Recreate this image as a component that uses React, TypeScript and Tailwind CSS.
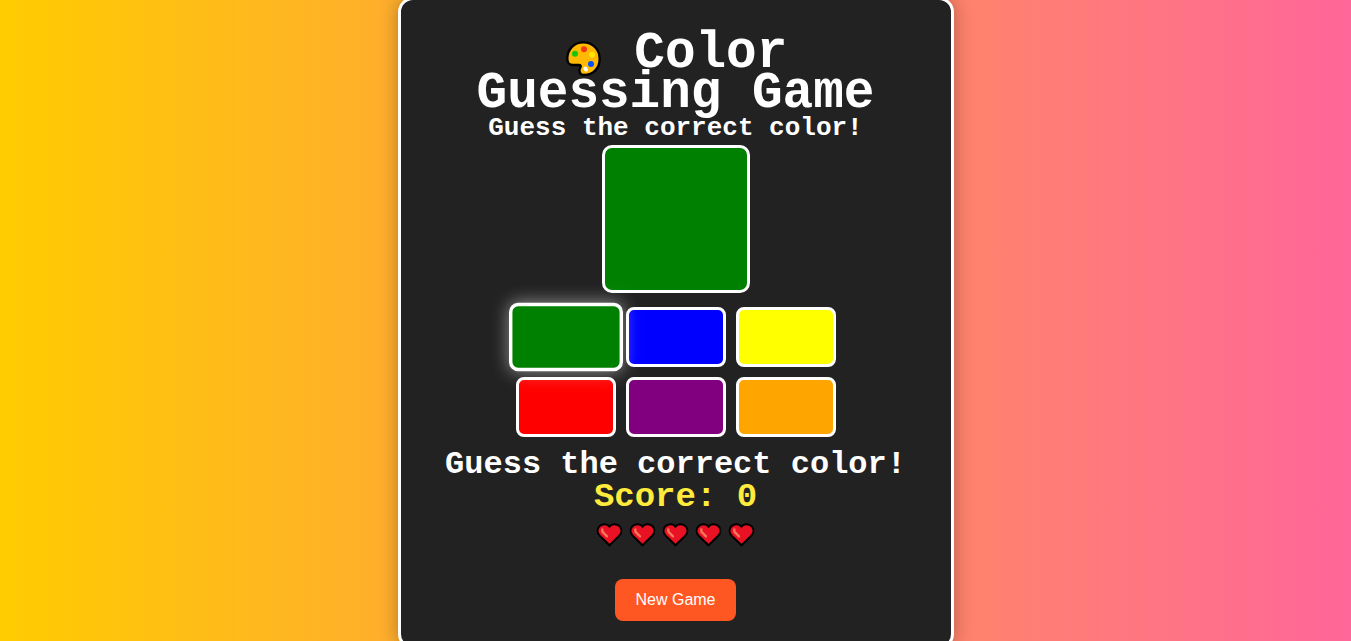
import { useState } from "react";

const COLORS = [
  { name: "Green", style: "bg-[green]" },
  { name: "Blue", style: "bg-[blue]" },
  { name: "Yellow", style: "bg-[yellow]" },
  { name: "Red", style: "bg-[red]" },
  { name: "Purple", style: "bg-[purple]" },
  { name: "Orange", style: "bg-[orange]" },
];

const MAX_LIVES = 5;

function Palette() {
  return (
    <svg viewBox="0 0 120 108" className="-mb-[10px] inline-block h-9 w-10 align-baseline" aria-hidden="true">
      <path
        d="M58 4C29 4 10 26 10 53C10 64 17 72 27 72H45C50 72 52 76 49 80C43 89 47 102 60 102C88 102 107 81 107 53C107 25 85 4 58 4Z"
        fill="#ffb900"
        stroke="#000"
        strokeWidth="7"
        strokeLinejoin="round"
      />
      <circle cx="33" cy="38" r="9" fill="#16c60c" />
      <circle cx="60" cy="25" r="9" fill="#f03a17" />
      <circle cx="84" cy="41" r="9" fill="#ffe600" />
      <circle cx="81" cy="69" r="9" fill="#0050ff" />
      <ellipse cx="65" cy="84" rx="6" ry="8" fill="#fff" transform="rotate(-35 65 84)" />
    </svg>
  );
}

function Heart() {
  return (
    <svg viewBox="0 0 81 78" className="h-[26px] w-[27px]" aria-hidden="true">
      <path
        d="M40.500 14C34 5 20 4 11 12C3 20 3 32 11 41L40.500 70L70 41C78 32 78 20 70 12C61 4 47 5 40.500 14Z"
        fill="#e81224"
        stroke="#000"
        strokeWidth="6"
        strokeLinejoin="miter"
      />
      <path d="M19 22V29L33 43" fill="none" stroke="#f4775a" strokeWidth="7" strokeLinecap="round" strokeLinejoin="round" />
    </svg>
  );
}

export default function App() {
  const [target, setTarget] = useState("Green");
  const [score, setScore] = useState(0);
  const [lives, setLives] = useState(MAX_LIVES);
  const [status, setStatus] = useState("Guess the correct color!");

  const pickTarget = () => setTarget(COLORS[Math.floor(Math.random() * COLORS.length)].name);

  const guess = (name: string) => {
    if (lives === 0) return;
    if (name === target) {
      setScore(score + 1);
      setStatus("Correct!");
      pickTarget();
    } else {
      setLives(lives - 1);
      setStatus(lives === 1 ? "Game over!" : "Wrong! Try again.");
    }
  };

  const newGame = () => {
    setScore(0);
    setLives(MAX_LIVES);
    setStatus("Guess the correct color!");
    pickTarget();
  };

  const targetStyle = COLORS.find((c) => c.name === target)!.style;

  return (
    <div className="flex h-screen items-start justify-center overflow-hidden bg-[linear-gradient(to_right,#ffcc00,#ff6699)] font-['Liberation_Mono',monospace] text-white">
      <main className="-mt-[3px] flex w-full max-w-[556px] shrink-0 flex-col items-center rounded-[15px] border-3 border-white bg-[#222] px-5 pt-[34px] pb-[25px] text-center shadow-[0_0_20px_rgba(0,0,0,0.3)]">
        <h1 className="px-8 text-[51px] leading-10 font-bold">
          <Palette /> Color Guessing Game
        </h1>
        <p className="mt-[2px] text-[26px] leading-6 font-bold">Guess the correct color!</p>
        <div className={`mt-[5px] size-[148px] rounded-[10px] border-3 border-white ${targetStyle}`} />
        <div className="mt-[14px] grid grid-cols-3 gap-[10px]">
          {COLORS.map((c, i) => (
            <button
              key={c.name}
              type="button"
              aria-label={c.name}
              onClick={() => guess(c.name)}
              className={`h-[60px] w-[100px] cursor-pointer rounded-lg border-3 border-white ${c.style} ${
                i === 0 ? "scale-[1.14] shadow-[0_0_15px_rgba(255,255,255,0.5)]" : ""
              }`}
            />
          ))}
        </div>
        <p className="mt-[13px] text-[32px] leading-[30px] font-bold">{status}</p>
        <p className="mt-[2px] text-[34px] leading-[30px] font-bold text-[#ffeb3b]">Score: {score}</p>
        <div className="mt-[10px] flex h-[26px] gap-[6px]" role="img" aria-label={`${lives} lives left`}>
          {Array.from({ length: lives }, (_, i) => (
            <Heart key={i} />
          ))}
        </div>
        <button
          type="button"
          onClick={newGame}
          className="mt-[31px] cursor-pointer rounded-lg bg-[#ff5722] px-5 py-[9px] font-['Liberation_Sans',Arial,sans-serif] text-base leading-6"
        >
          New Game
        </button>
      </main>
    </div>
  );
}
